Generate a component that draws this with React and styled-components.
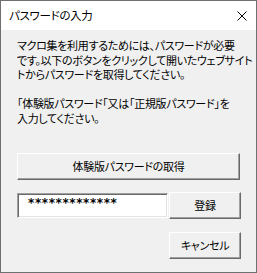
import styled, { createGlobalStyle } from 'styled-components'

const GlobalStyle = createGlobalStyle`
  html, body {
    margin: 0;
    padding: 0;
    background: #f0f0f0;
  }
  body {
    font-family: "Noto Sans CJK JP", "Noto Sans", sans-serif;
    font-feature-settings: "palt";
    font-size: 11px;
    letter-spacing: -0.3px;
    color: #000;
  }
`

// styles
const Window = styled.div`
  width: 257px;
  height: 273px;
  box-sizing: border-box;
  border: 1px solid #6f6f6f;
  display: flex;
  flex-direction: column;
  background: #f0f0f0;
  overflow: hidden;
`

const TitleBar = styled.div`
  height: 29px;
  flex: none;
  background: #fff;
  display: flex;
  align-items: center;
  justify-content: space-between;
  padding-left: 8px;
`

const Title = styled.span`
  font-size: 11.5px;
  line-height: 1;
`

const Close = styled.svg`
  margin-right: 9px;
  display: block;
`

const Body = styled.div`
  flex: 1;
  display: flex;
  flex-direction: column;
  padding: 8px 15px 0 16px;
`

const Message = styled.p`
  margin: 0;
  line-height: 14.6px;
  white-space: nowrap;
`

const Line = styled.span`
  display: block;
  min-height: 14.6px;
`

const Button = styled.button`
  font: inherit;
  letter-spacing: inherit;
  color: #000;
  height: 27px;
  width: ${p => (p.$w ? p.$w + 'px' : '100%')};
  flex: none;
  padding: 0;
  background: #f0f0f0;
  border: 1px solid;
  border-color: #fff #696969 #696969 #fff;
  box-shadow: inset -1px -1px #a0a0a0;
  box-sizing: border-box;
`

const WideButton = styled(Button)`
  margin-top: 27px;
  margin-right: 1px;
  width: auto;
`

const Row = styled.div`
  display: flex;
  align-items: center;
  gap: 1px;
  margin-top: 12px;
`

const Input = styled.div`
  width: 151px;
  height: 25px;
  box-sizing: border-box;
  background: #fff;
  border: 1px solid;
  border-color: #a0a0a0 #fff #fff #a0a0a0;
  box-shadow: inset 1px 1px #696969, inset -1px -1px #e3e3e3;
  padding: 2px 0 0 10px;
  font-family: "DejaVu Sans", sans-serif;
  font-size: 12px;
  font-weight: bold;
  letter-spacing: 0.6px;
  line-height: 14px;
`

const Right = styled.div`
  display: flex;
  justify-content: flex-end;
  margin-top: 13px;
`

export default function App() {
  return (
    <>
      <GlobalStyle />
      <Window>
        <TitleBar>
          <Title>パスワードの入力</Title>
          <Close width="10" height="10" viewBox="0 0 10 10">
            <path d="M0.5 0.5 L9.5 9.5 M9.5 0.5 L0.5 9.5" stroke="#000" strokeWidth="1" />
          </Close>
        </TitleBar>
        <Body>
          <Message>
            <Line>マクロ集を利用するためには、パスワードが必要</Line>
            <Line>です。以下のボタンをクリックして開いたウェブサイト</Line>
            <Line>トからパスワードを取得してください。</Line>
            <Line />
            <Line>「体験版パスワード「又は「正規版パスワード」を</Line>
            <Line>入力してください。</Line>
          </Message>
          <WideButton>体験版パスワードの取得</WideButton>
          <Row>
            <Input>*************</Input>
            <Button $w={72}>登録</Button>
          </Row>
          <Right>
            <Button $w={72}>キャンセル</Button>
          </Right>
        </Body>
      </Window>
    </>
  )
}
